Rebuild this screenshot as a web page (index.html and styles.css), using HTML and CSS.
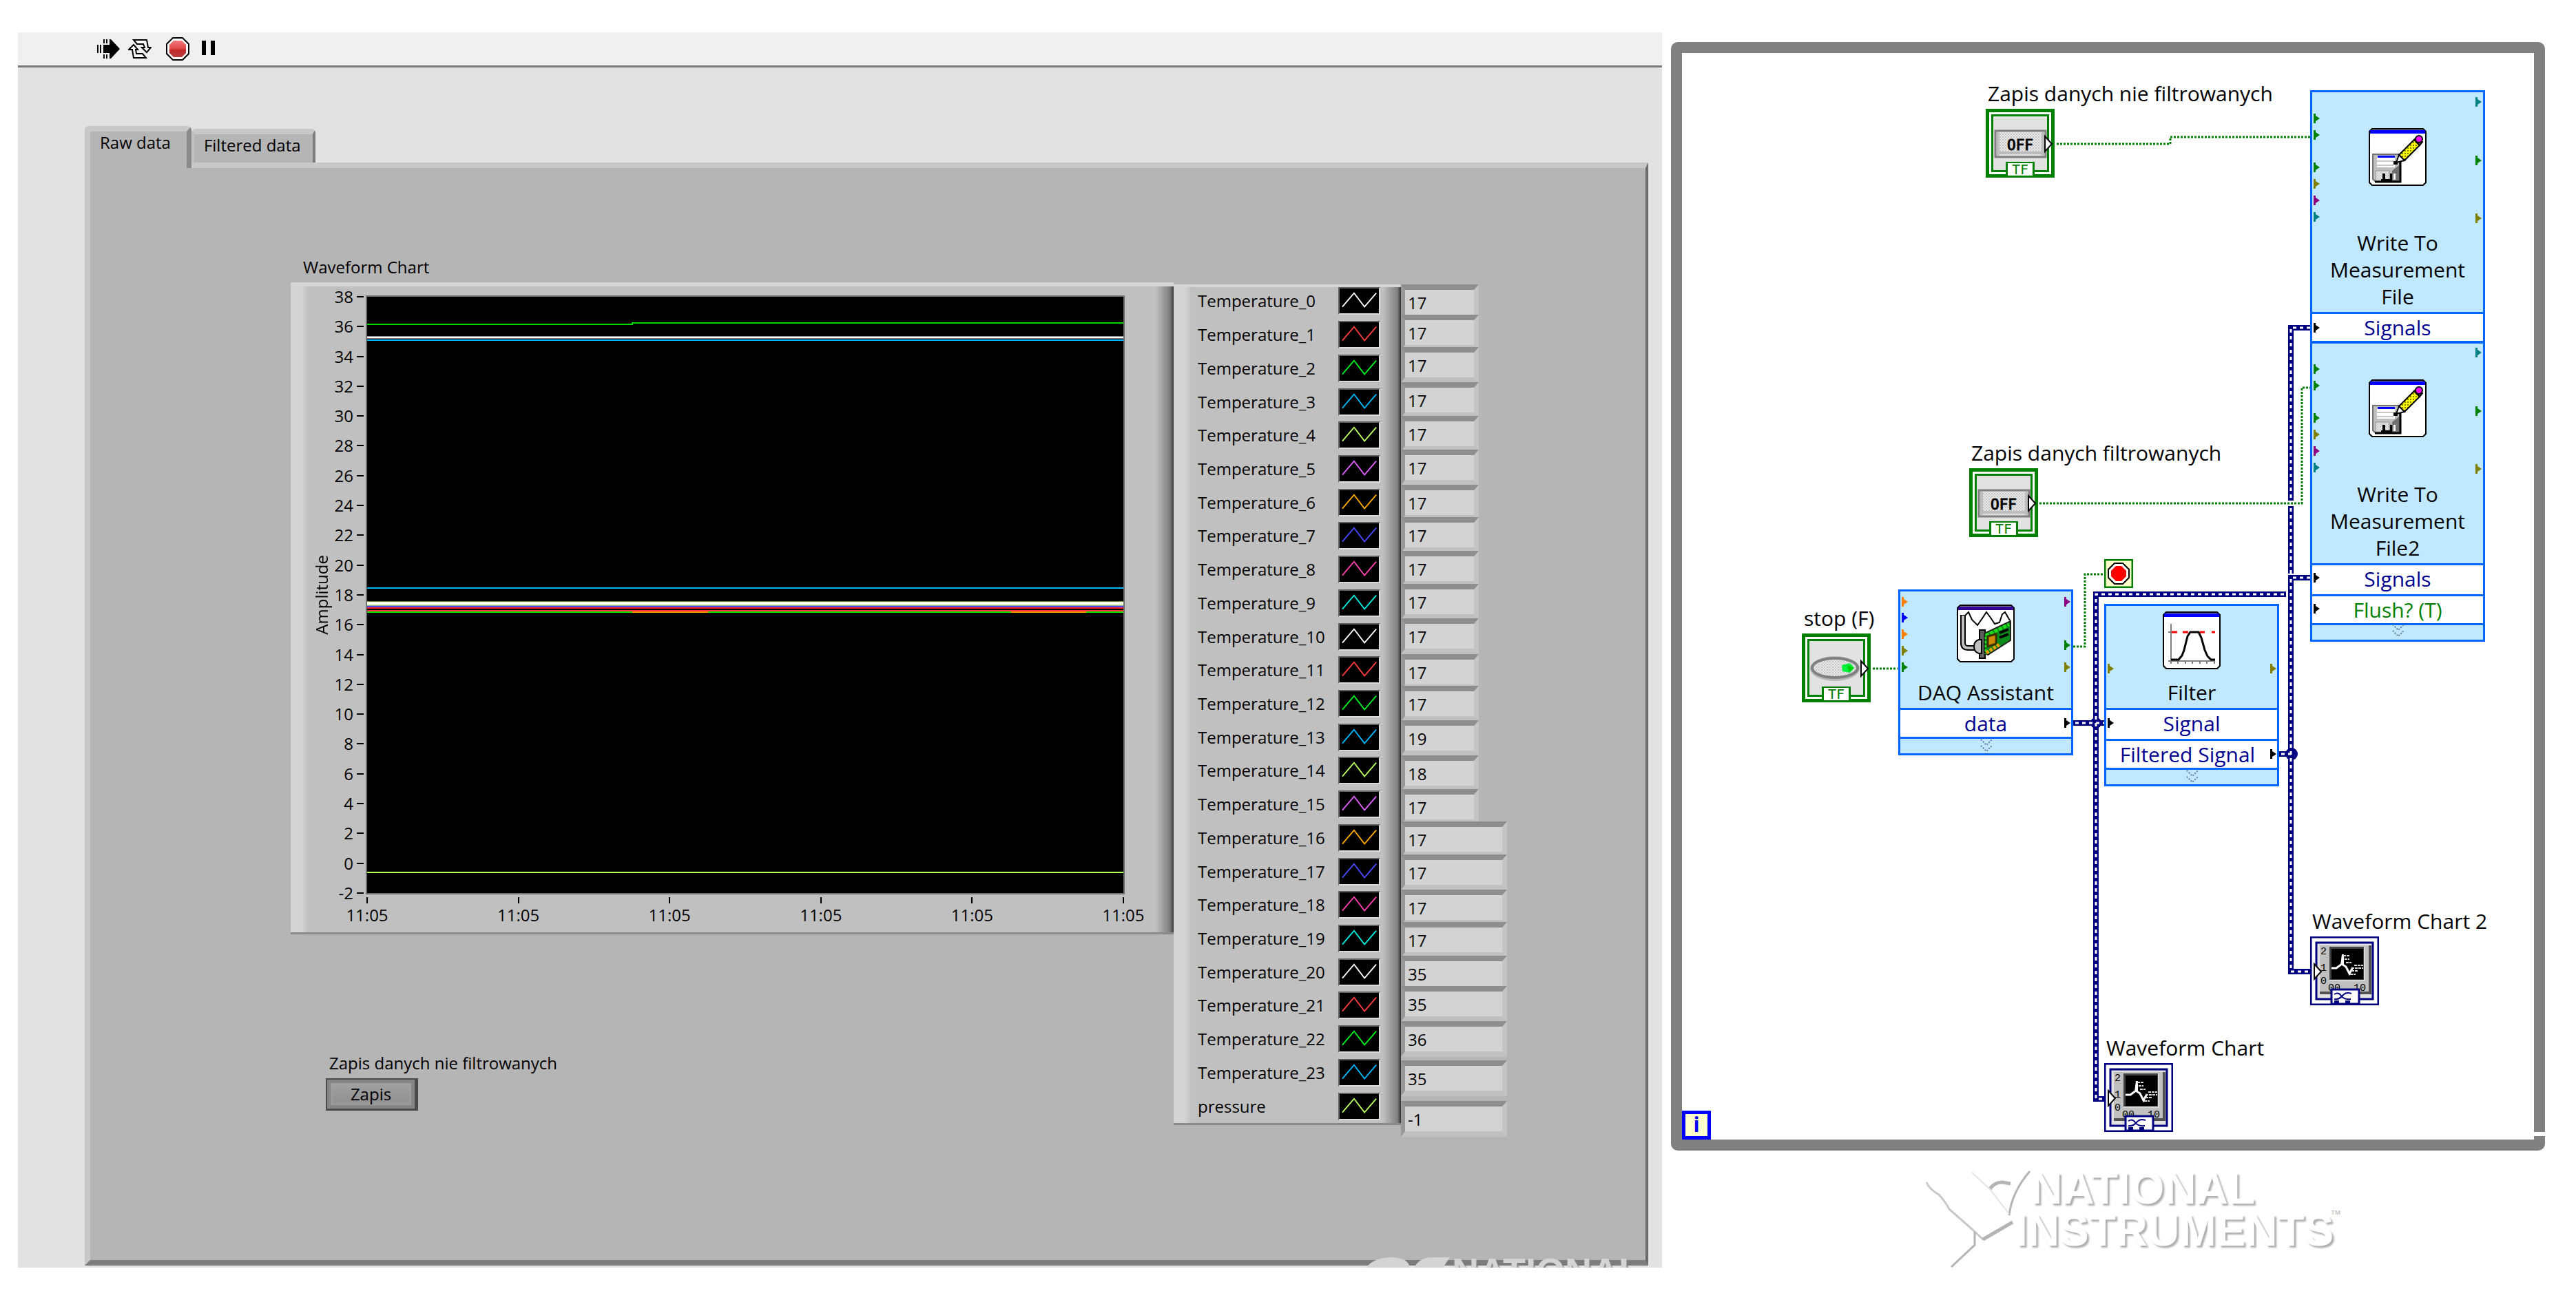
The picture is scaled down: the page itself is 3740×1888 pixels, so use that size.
FILE: index.html
```html
<!DOCTYPE html>
<html lang="pl">
<head>
<meta charset="utf-8">
<title>Waveform Chart</title>
<link rel="stylesheet" href="styles.css">
</head>
<body>
<svg class="defs" aria-hidden="true">
  <defs>
    <symbol id="zigzag" viewBox="0 0 60 38"><path d="M4 28 L22 7 L38 28 L56 7" fill="none" stroke="currentColor" stroke-width="2"/></symbol>
    <path id="port" d="M0 -7 H3 V-4 L9 0 L3 4 V7 H0 Z"/>
    <path id="port-open" d="M0 -11 L10 0 L0 11 Z" fill="#fff" stroke="#000" stroke-width="2"/>
    <path id="chevrons" d="M-8 0 L0 8 L8 0 M-8 9 L0 17 L8 9" fill="none" stroke="#5f7f99" stroke-width="2" stroke-dasharray="2 2"/>
    <linearGradient id="stopFill" x1="0" y1="0" x2="0" y2="1"><stop offset="0" stop-color="#f27a7a"/><stop offset=".5" stop-color="#e04848"/><stop offset=".55" stop-color="#c42828"/><stop offset="1" stop-color="#b84040"/></linearGradient>
    <pattern id="mesh" width="4" height="4" patternUnits="userSpaceOnUse"><rect width="4" height="4" fill="#e8e8e8"/><rect width="2" height="2" fill="#c4c4c4"/><rect x="2" y="2" width="2" height="2" fill="#d4d4d4"/></pattern>
    <pattern id="yellowMesh" width="4" height="4" patternUnits="userSpaceOnUse"><rect width="4" height="4" fill="#ffff00"/><rect width="2" height="2" fill="#808000"/></pattern>
    <symbol id="frame" viewBox="0 0 84 84"><path d="M5 1 H79 L83 5 V79 L79 83 H5 L1 79 V5 Z" fill="#fff" stroke="#000" stroke-width="2"/><path d="M5 1 H79" stroke="#000" stroke-width="3"/></symbol>
    <symbol id="write-file" viewBox="0 0 84 84">
      <use href="#frame"/><path d="M2 3 H82 V8 H2 Z" fill="#00f"/>
      <path d="M6 38 H45 V77 H9 L6 74 Z" fill="#c0c0c0" stroke="#707070" stroke-width="2"/>
      <path d="M46 46 V78 H9" fill="none" stroke="#000" stroke-width="3"/>
      <path d="M12 42 H38 V57 H12 Z" fill="#fff"/><path d="M13 40 H38 V43 H13 Z" fill="#00f"/>
      <path d="M12 48 H36 M12 54 H36" stroke="#c8c8c8" stroke-width="2"/>
      <path d="M44 54 L34 62 V76 H44 Z" fill="#707070"/><path d="M10 62 H30 V76 H10 Z" fill="url(#mesh)" stroke="#909090"/>
      <path d="M20 66 H24 V74 H20 Z M31 66 H34 V77 H18 V74 H31 Z" fill="#000"/><path d="M36 66 H39 V75 H36 Z" fill="#fff"/>
      <path d="M44 39 L66 17 L74 25 L52 47 Z" fill="url(#yellowMesh)" stroke="#000" stroke-width="2"/>
      <path d="M44 39 L40 50 L52 47 Z" fill="#fff" stroke="#000" stroke-width="2"/><path d="M36 48 H42 V53 H36 Z" fill="#000"/>
      <path d="M66 17 L70 13 L78 20 L74 25 Z" fill="#606060" stroke="#000" stroke-width="2"/><circle cx="73" cy="16" r="5" fill="#f0f" stroke="#000" stroke-width="2"/>
    </symbol>
    <symbol id="daq" viewBox="0 0 84 84">
      <use href="#frame"/><path d="M2 3 H82 V8 H2 Z" fill="#330099"/>
      <path d="M12 16 L17 11 L22 22 L30 30 L37 20 L43 11 L49 19 L55 28 L62 26 L66 14 L70 11 L77 23" fill="none" stroke="#000" stroke-width="2"/>
      <path d="M9 15 V56 Q9 63 17 63 H27" fill="none" stroke="#000" stroke-width="8"/><path d="M9 16 V56 Q9 63 17 63 H27" fill="none" stroke="#c0c0c0" stroke-width="4"/>
      <path d="M33 37 H41 V78 H33 Z" fill="#606060" stroke="#000" stroke-width="2"/>
      <path d="M36 51 H32 Q25 53 25 61 Q25 69 32 71 H36 Z" fill="#c0c0c0" stroke="#000" stroke-width="2"/>
      <path d="M40 42 L78 24 V52 L45 73 L40 70 Z" fill="#0b8a1c" stroke="#222" stroke-width="2"/>
      <path d="M42 45 L76 29" stroke="#1be01b" stroke-width="5" stroke-dasharray="5 2"/><path d="M42 47 V72" stroke="#1be01b" stroke-width="3" stroke-dasharray="3 3"/>
      <path d="M45 46 L57 43 V57 L45 61 Z" fill="#d08a00" stroke="#3a3000" stroke-width="3"/>
      <path d="M62 41 L75 36 M62 48 L75 43" stroke="#000" stroke-width="4"/>
      <path d="M43 70 L62 58" stroke="#f0a000" stroke-width="5" stroke-dasharray="4 2"/>
    </symbol>
    <symbol id="filter" viewBox="0 0 84 84">
      <use href="#frame"/><path d="M2 3 H82 V8 H2 Z" fill="#00f"/>
      <path d="M12 18 V76 M8 72 H76 M8 30 H16 M22 72 V76 M33 72 V76 M43 72 V76 M54 72 V76 M64 72 V76 M75 72 V76" stroke="#808080" stroke-width="2" fill="none"/>
      <path d="M13 30 H21 M29 30 H37 M54 30 H61 M71 30 H76" stroke="#f00" stroke-width="3"/>
      <path d="M12 70 H23 L28 64 L31 56 L36 36 L40 30 H52 L56 38 L61 56 L65 65 L70 70 H76" fill="none" stroke="#000" stroke-width="3"/>
    </symbol>
    <symbol id="bool-terminal" viewBox="0 0 100 100">
      <path d="M0 0 H100 V100 H0 Z" fill="#008000"/><path d="M5 5 H95 V95 H5 Z" fill="#fff"/><path d="M8 8 H92 V92 H8 Z" fill="#008000"/><path d="M11 11 H89 V89 H11 Z" fill="#e2e2e2"/>
      <path d="M29 77 H71 V100 H29 Z" fill="#008000"/><path d="M32 79 H68 V97 H32 Z" fill="#fff"/>
      <text x="50" y="95" class="tf">TF</text>
    </symbol>
    <symbol id="off-terminal" viewBox="0 0 100 100">
      <use href="#bool-terminal"/>
      <path d="M14 32 H87 V70 H14 Z" fill="url(#mesh)" stroke="#808080" stroke-width="3"/>
      <path d="M16 34 H20 V68 H16 Z M81 34 H86 V68 H81 Z M16 62 H86 V66 H16 Z" fill="#b0b0b0" opacity=".7"/>
      <text x="50" y="60" class="off">OFF</text>
      <use href="#port-open" x="86" y="51"/>
    </symbol>
    <symbol id="stop-terminal" viewBox="0 0 100 100">
      <use href="#bool-terminal"/>
      <ellipse cx="48" cy="51" rx="36" ry="18" fill="#b8b8b8"/><ellipse cx="48" cy="50" rx="33" ry="14" fill="url(#mesh)" stroke="#808080" stroke-width="4"/>
      <path d="M58 46 L70 43 L76 50 L70 57 L59 55 Z" fill="#00f03c"/><path d="M66 46 L76 50 L68 56 Z" fill="#00d000"/>
      <use href="#port-open" x="86" y="51"/>
    </symbol>
    <symbol id="chart-terminal" viewBox="0 0 100 100">
      <path d="M1 1 H99 V99 H1 Z" fill="#fff" stroke="#000080" stroke-width="3"/>
      <path d="M9 9 H91 V91 H9 Z" fill="#e2e2e2" stroke="#000080" stroke-width="3"/>
      <path d="M14 13 H89 V84 H14 Z" fill="#505050"/><path d="M14 13 H85 V80 H14 Z" fill="#c0c0c0"/><path d="M14 81 H89 V84 H14 Z" fill="#505050"/>
      <path d="M28 15 H80 V65 H28 Z" fill="#d8d8d8"/><path d="M28 15 H78 V63 H28 Z" fill="#404040"/><path d="M31 18 H77 V62 H31 Z" fill="#000"/>
      <path d="M31 46 H38 L46 40 L52 44 L57 54 L62 45" fill="none" stroke="#fff" stroke-width="3"/><path d="M44 42 L46 26 H49 V42 Z" fill="#fff"/>
      <path d="M48 28 H57 M50 33 H57 M52 38 H60 M60 50 H70 M58 55 H66 M64 42 H77 M60 46 H77" stroke="#d8d8d8" stroke-width="2" stroke-dasharray="4 1"/>
      <text x="15" y="26" class="scale">2</text><text x="15" y="50" class="scale">1</text><text x="15" y="69" class="scale">0</text>
      <text x="26" y="79" class="scale">00</text><text x="63" y="79" class="scale">10</text>
      <path d="M31 77 H71 V98 H31 Z" fill="#fff" stroke="#000080" stroke-width="3"/>
      <path d="M35 84 Q41 80 45 86 T59 91 M35 91 Q42 92 47 86 T60 83" fill="none" stroke="#000080" stroke-width="2"/><path d="M35 93 H42 V99 H35 Z M51 93 H58 V99 H51 Z" fill="#000080"/>
      <path d="M6 40 L16 51 L6 62 Z" fill="#fff" stroke="#000" stroke-width="2"/>
    </symbol>
  </defs>
</svg>

<main class="page">
  <section class="front">
    <header class="toolbar">
      <button type="button" class="tool" aria-label="Run"><svg viewBox="0 0 34 34"><path d="M14 11 H18 V3 H20 L33 17 L20 31 H18 V23 H14 Z" fill="#000"/><path d="M9 11 H14 V23 H9 Z" fill="#000"/><path d="M1 11 V23 M5 11 V23 M10 3 V9 M14 3 V9 M10 25 V31 M14 25 V31" stroke="#000" stroke-width="2"/></svg></button>
      <button type="button" class="tool" aria-label="Run continuously"><svg viewBox="0 0 34 34"><g fill="#fff" stroke="#000" stroke-width="2"><path d="M8 4 H27 L29 15 H33 L27 22 L20 15 H24 L22 10 H13 Z"/><path d="M26 30 H8 L6 18 H1 L8 11 L14 18 H11 L12 24 H21 Z"/></g></svg></button>
      <button type="button" class="tool tool-stop" aria-label="Abort"><svg viewBox="0 0 34 34"><path d="M10 1 H24 L33 10 V24 L24 33 H10 L1 24 V10 Z" fill="#fff" stroke="#000" stroke-width="2"/><path d="M11 5 H23 L29 11 V23 L23 29 H11 L5 23 V11 Z" fill="url(#stopFill)"/></svg></button>
      <button type="button" class="tool" aria-label="Pause"><svg viewBox="0 0 34 34"><path d="M7 5 H13 V26 H7 Z M20 5 H26 V26 H20 Z" fill="#000"/></svg></button>
    </header>
    <div class="panel">
      <div class="tabs" role="tablist">
        <button type="button" class="tab tab-active" role="tab" aria-selected="true">Raw data</button>
        <button type="button" class="tab" role="tab" aria-selected="false">Filtered data</button>
      </div>
      <div class="tab-page" role="tabpanel">
        <div class="chart-column">
          <h2 class="chart-title">Waveform Chart</h2>
          <div class="chart">
            <div class="y-title">Amplitude</div>
            <ul class="y-axis"><li>38</li><li>36</li><li>34</li><li>32</li><li>30</li><li>28</li><li>26</li><li>24</li><li>22</li><li>20</li><li>18</li><li>16</li><li>14</li><li>12</li><li>10</li><li>8</li><li>6</li><li>4</li><li>2</li><li>0</li><li>-2</li></ul>
            <svg class="plot" viewBox="0 0 1100 868" preserveAspectRatio="none" role="img" aria-label="Temperatures and pressure over time">
              <g fill="none" stroke-width="2">
                <path d="M0 41 H386 V39 H1100" stroke="#00d800"/>
                <path d="M0 60 H1100" stroke="#fff" stroke-width="3"/>
                <path d="M0 64 H1100" stroke="#00b4ff"/>
                <path d="M0 424 H1100" stroke="#00b4ff"/>
                <path d="M0 447 H1100" stroke="#d8ff90" stroke-width="7"/>
                <path d="M0 446 H1100" stroke="#fff" stroke-width="3"/>
                <path d="M0 451 H1100" stroke="#4848e8" stroke-width="3"/>
                <path d="M0 453 H1100" stroke="#ff2020"/>
                <path d="M0 457 H1100" stroke="#ff3030"/>
                <path d="M0 459 H1100" stroke="#00e800"/>
                <path d="M386 459 H496 M936 459 H1045" stroke="#ff9000"/>
                <path d="M0 837 H1100" stroke="#b4ff50"/>
              </g>
            </svg>
            <ul class="x-axis"><li>11:05</li><li>11:05</li><li>11:05</li><li>11:05</li><li>11:05</li><li>11:05</li></ul>
          </div>
          <div class="save">
            <label for="save">Zapis danych nie filtrowanych</label>
            <button type="button" id="save" class="save-button">Zapis</button>
          </div>
        </div>
        <div class="legend">
          <div class="item white"><label for="v0">Temperature_0</label><svg><use href="#zigzag"/></svg></div>
          <div class="item red"><label for="v1">Temperature_1</label><svg><use href="#zigzag"/></svg></div>
          <div class="item green"><label for="v2">Temperature_2</label><svg><use href="#zigzag"/></svg></div>
          <div class="item blue"><label for="v3">Temperature_3</label><svg><use href="#zigzag"/></svg></div>
          <div class="item lime"><label for="v4">Temperature_4</label><svg><use href="#zigzag"/></svg></div>
          <div class="item violet"><label for="v5">Temperature_5</label><svg><use href="#zigzag"/></svg></div>
          <div class="item orange"><label for="v6">Temperature_6</label><svg><use href="#zigzag"/></svg></div>
          <div class="item indigo"><label for="v7">Temperature_7</label><svg><use href="#zigzag"/></svg></div>
          <div class="item pink"><label for="v8">Temperature_8</label><svg><use href="#zigzag"/></svg></div>
          <div class="item cyan"><label for="v9">Temperature_9</label><svg><use href="#zigzag"/></svg></div>
          <div class="item white"><label for="v10">Temperature_10</label><svg><use href="#zigzag"/></svg></div>
          <div class="item red"><label for="v11">Temperature_11</label><svg><use href="#zigzag"/></svg></div>
          <div class="item green"><label for="v12">Temperature_12</label><svg><use href="#zigzag"/></svg></div>
          <div class="item blue"><label for="v13">Temperature_13</label><svg><use href="#zigzag"/></svg></div>
          <div class="item lime"><label for="v14">Temperature_14</label><svg><use href="#zigzag"/></svg></div>
          <div class="item violet"><label for="v15">Temperature_15</label><svg><use href="#zigzag"/></svg></div>
          <div class="item orange"><label for="v16">Temperature_16</label><svg><use href="#zigzag"/></svg></div>
          <div class="item indigo"><label for="v17">Temperature_17</label><svg><use href="#zigzag"/></svg></div>
          <div class="item pink"><label for="v18">Temperature_18</label><svg><use href="#zigzag"/></svg></div>
          <div class="item cyan"><label for="v19">Temperature_19</label><svg><use href="#zigzag"/></svg></div>
          <div class="item white"><label for="v20">Temperature_20</label><svg><use href="#zigzag"/></svg></div>
          <div class="item red"><label for="v21">Temperature_21</label><svg><use href="#zigzag"/></svg></div>
          <div class="item green"><label for="v22">Temperature_22</label><svg><use href="#zigzag"/></svg></div>
          <div class="item blue"><label for="v23">Temperature_23</label><svg><use href="#zigzag"/></svg></div>
          <div class="item lime"><label for="v24">pressure</label><svg><use href="#zigzag"/></svg></div>
        </div>
        <div class="values">
          <input id="v0" value="17" readonly>
          <input id="v1" value="17" readonly>
          <input id="v2" value="17" readonly>
          <input id="v3" value="17" readonly>
          <input id="v4" value="17" readonly>
          <input id="v5" value="17" readonly>
          <input id="v6" value="17" readonly>
          <input id="v7" value="17" readonly>
          <input id="v8" value="17" readonly>
          <input id="v9" value="17" readonly>
          <input id="v10" value="17" readonly>
          <input id="v11" value="17" readonly>
          <input id="v12" value="17" readonly>
          <input id="v13" value="19" readonly>
          <input id="v14" value="18" readonly>
          <input id="v15" value="17" readonly>
          <input id="v16" class="wide" value="17" readonly>
          <input id="v17" class="wide" value="17" readonly>
          <input id="v18" class="wide" value="17" readonly>
          <input id="v19" class="wide" value="17" readonly>
          <input id="v20" class="wide" value="35" readonly>
          <input id="v21" class="wide" value="35" readonly>
          <input id="v22" class="wide" value="36" readonly>
          <input id="v23" class="wide" value="35" readonly>
          <input id="v24" class="wide" value="-1" readonly>
        </div>
      </div>
    </div>
    <svg class="watermark" viewBox="0 0 390 16" aria-hidden="true">
      <path d="M0 16 Q12 1 38 1 Q62 2 64 16 Z M70 16 Q78 1 96 1 H122 L112 16 Z" fill="#d4d4d4"/>
      <text x="125" y="40" class="mark mark-small">NATIONAL</text>
    </svg>
  </section>

  <section class="diagram">
    <div class="loop">
      <div class="node write-1">
        <div class="node-head"><svg class="node-icon"><use href="#write-file"/></svg><div class="node-name">Write To<br>Measurement<br>File</div></div>
        <div class="node-row">Signals</div>
      </div>
      <div class="node write-2">
        <div class="node-head"><svg class="node-icon"><use href="#write-file"/></svg><div class="node-name">Write To<br>Measurement<br>File2</div></div>
        <div class="node-row tall">Signals</div>
        <div class="node-row flush">Flush? (T)</div>
        <div class="node-foot"></div>
      </div>
      <div class="node daq">
        <div class="node-head"><svg class="node-icon"><use href="#daq"/></svg><div class="node-name">DAQ Assistant</div></div>
        <div class="node-row">data</div>
        <div class="node-foot"></div>
      </div>
      <div class="node filter">
        <div class="node-head"><svg class="node-icon"><use href="#filter"/></svg><div class="node-name">Filter</div></div>
        <div class="node-row tall">Signal</div>
        <div class="node-row output">Filtered Signal</div>
        <div class="node-foot"></div>
      </div>

      <div class="terminal save-raw"><span>Zapis danych nie filtrowanych</span><svg><use href="#off-terminal"/></svg></div>
      <div class="terminal save-filtered"><span>Zapis danych filtrowanych</span><svg><use href="#off-terminal"/></svg></div>
      <div class="terminal stop"><span>stop (F)</span><svg><use href="#stop-terminal"/></svg></div>
      <div class="terminal chart-2"><span>Waveform Chart 2</span><svg><use href="#chart-terminal"/></svg></div>
      <div class="terminal chart-1"><span>Waveform Chart</span><svg><use href="#chart-terminal"/></svg></div>
      <svg class="condition" viewBox="0 0 42 42" role="img" aria-label="Stop condition"><path d="M1 1 H41 V41 H1 Z" fill="#ffffcc" stroke="#008000" stroke-width="3"/><path d="M15 6 H27 L36 15 V27 L27 36 H15 L6 27 V15 Z" fill="#fff" stroke="#000" stroke-width="2"/><path d="M17 10 H25 L32 17 V25 L25 32 H17 L10 25 V17 Z" fill="#f00"/></svg>
      <div class="iteration">i</div>

      <!-- wires and node ports -->
      <svg class="wires" viewBox="2442 77 1237 1578" aria-hidden="true">
        <g fill="none" stroke="#008000" stroke-width="3" stroke-dasharray="3 2">
          <path d="M2986 209 H3151 V199 H3354"/>
          <path d="M2961 731 H3342 V563 H3354"/>
          <path d="M2719 971 H2755"/>
          <path d="M3010 939 H3027 V834 H3055"/>
        </g>
        <g fill="none" stroke="#000080" stroke-width="8">
          <path d="M3354 476 H3326 V727 M3326 735 V833"/>
          <path d="M3354 839 H3326 V1411 H3354"/>
          <path d="M3319 863 H3043 V1596 H3055"/>
          <path d="M3010 1050 H3055 M3309 1095 H3326"/>
        </g>
        <g fill="#000080"><circle cx="3043" cy="1050" r="8"/><circle cx="3327" cy="1095" r="9"/></g>
        <g fill="none" stroke="#fff" stroke-width="3" stroke-dasharray="5 5">
          <path d="M3354 476 H3326 V727 M3326 738 V833"/>
          <path d="M3354 839 H3326 V1411 H3354"/>
          <path d="M3316 863 H3043 V1596 H3055"/>
          <path d="M3013 1050 H3055 M3312 1095 H3326"/>
        </g>
        <g fill="#008000">
          <use href="#port" x="3359" y="172"/><use href="#port" x="3359" y="196"/><use href="#port" x="3359" y="243"/><use href="#port" x="3594" y="233"/>
          <use href="#port" x="3359" y="536"/><use href="#port" x="3359" y="560"/><use href="#port" x="3359" y="607"/><use href="#port" x="3594" y="597"/>
          <use href="#port" x="2761" y="969"/><use href="#port" x="2997" y="937"/>
        </g>
        <g fill="#808000">
          <use href="#port" x="3359" y="267"/><use href="#port" x="3594" y="317"/><use href="#port" x="3359" y="631"/><use href="#port" x="3594" y="681"/>
          <use href="#port" x="2761" y="945"/><use href="#port" x="2997" y="969"/><use href="#port" x="3060" y="971"/><use href="#port" x="3296" y="971"/>
        </g>
        <g fill="#8b0080"><use href="#port" x="3359" y="291"/><use href="#port" x="3359" y="655"/><use href="#port" x="2997" y="874"/></g>
        <g fill="#008080"><use href="#port" x="3359" y="315"/><use href="#port" x="3594" y="148"/><use href="#port" x="3359" y="679"/><use href="#port" x="3594" y="512"/></g>
        <g fill="#ff8000"><use href="#port" x="2761" y="874"/><use href="#port" x="2761" y="921"/></g>
        <use href="#port" x="2761" y="897" fill="#00f"/>
        <g fill="#000"><use href="#port" x="3359" y="476"/><use href="#port" x="3359" y="839"/><use href="#port" x="3359" y="884"/><use href="#port" x="2997" y="1050"/><use href="#port" x="3060" y="1050"/><use href="#port" x="3296" y="1095"/></g>
        <use href="#chevrons" x="3482" y="907"/><use href="#chevrons" x="2884" y="1074"/><use href="#chevrons" x="3183" y="1119"/>
      </svg>
    </div>
    <svg class="logo" viewBox="0 0 620 144">
      <g fill="none" stroke="#b4b4b4" stroke-width="3">
        <path d="M2 20 Q6 30 20 38 Q28 46 35 59 L68 88 L84 103 L127 78" stroke="#c8c8c8"/>
        <path d="M84 103 L127 78" stroke-width="5"/>
        <path d="M152 4 Q126 34 122 68"/>
        <path d="M94 30 Q100 20 112 20 L124 22" stroke-width="5"/>
        <path d="M68 6 L94 30 L122 66" stroke="#e4e4e4" stroke-width="2"/>
        <path d="M72 92 V111 L38 143"/>
      </g>
      <text x="153" y="51" class="mark">NATIONAL</text>
      <text x="131" y="112" class="mark">INSTRUMENTS</text>
      <text x="588" y="72" class="trade">™</text>
    </svg>
  </section>
</main>
</body>
</html>
```
FILE: styles.css
```css
* { box-sizing: border-box; }

body {
  margin: 0;
  background: #fff;
  color: #000;
  font-family: "Open Sans", "Noto Sans", sans-serif;
  font-size: 24px;
  line-height: 30px;
}

button, input { font: inherit; color: inherit; }
ul { margin: 0; padding: 0; list-style: none; }
.defs { position: absolute; width: 0; height: 0; }

.page {
  display: grid;
  grid-template-columns: 2387fr 1269fr;
  gap: 13px;
  min-height: 100vh;
  padding: 47px 45px 47px 26px;
}

/* Front panel */
.front {
  position: relative;
  display: flex;
  flex-direction: column;
  background: #e2e2e2;
}
.toolbar {
  display: flex;
  align-items: center;
  gap: 11px;
  height: 51px;
  padding-left: 115px;
  background: #f0f0f0;
  border-bottom: 3px solid #7a7a7a;
}
.tool { width: 34px; height: 34px; padding: 0; border: 0; background: none; }
.tool svg { display: block; width: 34px; height: 34px; }
.tool-stop { margin-left: 10px; }

.panel {
  display: flex;
  flex: 1;
  flex-direction: column;
  padding: 85px 20px 3px 97px;
}
.tabs { display: flex; align-items: flex-end; }
.tab {
  height: 49px;
  padding: 1px 17px 10px 14px;
  border: solid;
  border-width: 8px 4px 0;
  border-color: #c8c8c8 #7c7c7c #c8c8c8 #c0c0c0;
  border-radius: 6px 6px 0 0;
  background: #b5b5b5;
  line-height: 30px;
}
.tab-active {
  position: relative;
  height: 61px;
  margin-bottom: -8px;
  padding: 1px 23px 22px 14px;
  border-width: 8px 7px 0 8px;
  border-color: #c8c8c8 #8a8a8a #c8c8c8 #c8c8c8;
}
.tab-page {
  display: flex;
  flex: 1;
  align-items: flex-start;
  padding: 129px 201px 130px 291px;
  border: solid;
  border-width: 8px 4px 8px 8px;
  border-color: #c8c8c8 #6c6c6c #7c7c7c #c8c8c8;
  background: #b5b5b5;
}

/* Waveform chart */
.chart-column { flex: 1; }
.chart-title { margin: 0 0 7px 18px; font-size: 24px; font-weight: 400; line-height: 30px; }
.chart {
  display: grid;
  grid-template-columns: 46px 50px 1fr;
  grid-template-rows: 868px 41px;
  row-gap: 5px;
  padding: 20px 72px 13px 14px;
  background:
    linear-gradient(#d4d4d4, #d4d4d4) top / 100% 6px no-repeat,
    linear-gradient(#8a8a8a, #8a8a8a) bottom / 100% 3px no-repeat,
    linear-gradient(90deg, #d4d4d4 16px, #c0c0c0 26px, #c0c0c0 calc(100% - 26px), #808080 calc(100% - 6px), #404040);
}
.y-title {
  justify-self: end;
  align-self: center;
  writing-mode: vertical-rl;
  transform: rotate(180deg);
}
.y-axis {
  display: flex;
  flex-direction: column;
  justify-content: space-between;
  margin: -14px 4px -14px 0;
}
.y-axis li { display: flex; justify-content: flex-end; align-items: center; gap: 5px; }
.y-axis li::after { content: ""; width: 10px; height: 2px; background: #000; }
.plot {
  width: 100%;
  height: 100%;
  background: #000;
  outline: 2px solid #707070;
  outline-offset: -1px;
}
.x-axis {
  display: flex;
  grid-column: 3;
  justify-content: space-between;
  margin: 0 -32px;
}
.x-axis li { display: flex; flex-direction: column; align-items: center; gap: 2px; width: 66px; }
.x-axis li::before { content: ""; flex: none; width: 2px; height: 9px; background: #000; }

.save { display: flex; flex-direction: column; align-items: flex-start; gap: 7px; margin-top: 172px; padding-left: 51px; }
.save label { padding-left: 5px; }
.save-button {
  width: 134px;
  height: 47px;
  padding: 0;
  border: solid #4a4a4a;
  border-width: 2px 5px 3px 2px;
  background: linear-gradient(#a4a4a4, #8c8c8c);
  box-shadow: inset 0 0 0 5px #858585, inset 0 0 5px 7px #a0a0a0;
}

/* Plot legend and indicators */
.legend {
  display: grid;
  grid-template-rows: repeat(25, 1fr);
  width: 330px;
  min-height: 1221px;
  margin-top: 40px;
  padding: 0 30px 3px 35px;
  background:
    linear-gradient(#d4d4d4, #d4d4d4) top / 100% 4px no-repeat,
    linear-gradient(#8a8a8a, #8a8a8a) bottom / 100% 3px no-repeat,
    linear-gradient(90deg, #d4d4d4 16px, #c0c0c0 26px, #c0c0c0 calc(100% - 26px), #808080 calc(100% - 5px), #303030);
}
.item { display: flex; justify-content: space-between; align-items: center; }
.item label { color: #000; }
.item svg {
  width: 61px;
  height: 40px;
  border: solid;
  border-width: 2px;
  border-color: #606060 #dcdcdc #dcdcdc #606060;
  background: #000;
}
.white { color: #fff; }
.red { color: #ff3c3c; }
.green { color: #00f020; }
.blue { color: #00b8ff; }
.lime { color: #b8ff60; }
.violet { color: #e060ff; }
.orange { color: #ffa800; }
.indigo { color: #4848ff; }
.pink { color: #ff40b0; }
.cyan { color: #00f0e0; }

.values {
  display: grid;
  grid-template-rows: 44px 47px 51px 49px 49px 51px 47px 49px 48px 50px 52px 46px 50px 51px 49px 47px 48px 51px 47px 49px 44px 51px 57px 59px 52px;
  align-items: start;
  width: 154px;
  margin-top: 40px;
}
.values input {
  width: 113px;
  height: 52px;
  padding: 0 4px;
  border: solid;
  border-width: 8px 7px 8px 6px;
  border-color: #8e8e8e #c4c4c4 #c0c0c0 #989898;
  background: #d3d3d3;
}
.values .wide { width: 154px; }

.watermark { position: absolute; right: 40px; bottom: 0; width: 390px; height: 16px; }

/* Block diagram */
.diagram { padding-top: 14px; }
.loop {
  position: relative;
  min-height: 1610px;
  border: 16px solid #808080;
  border-radius: 10px;
  background: #fff;
  font-size: 30px;
  line-height: 39px;
}
/* break in the loop border above its resize corner */
.loop::after {
  content: "";
  position: absolute;
  right: -16px;
  bottom: 5px;
  width: 16px;
  height: 6px;
  background: #fff;
}
.node {
  position: absolute;
  width: 254px;
  border: 3px solid #0066ff;
  background: #fff;
  text-align: center;
}
.node-head {
  display: flex;
  flex-direction: column;
  align-items: center;
  justify-content: space-between;
  padding-bottom: 3px;
  background: #c0e8ff;
}
.node-icon { width: 84px; height: 84px; }
.node-row { height: 42px; border-top: 3px solid #0066ff; color: #000090; }
.node-row.tall { height: 45px; }
.node-row.flush { color: #008000; }
.node-row.output { padding-right: 12px; }
.node-foot { height: 24px; border-top: 3px solid #0066ff; background: #c0e8ff; }

.write-1 { left: 912px; top: 54px; }
.write-2 { left: 912px; top: 419px; }
.write-1 .node-head, .write-2 .node-head { height: 319px; padding-top: 52px; }
.daq { left: 314px; top: 779px; }
.daq .node-head { height: 169px; padding-top: 19px; }
.filter { left: 613px; top: 800px; }
.filter .node-head { height: 148px; padding-top: 8px; }

.terminal { position: absolute; display: flex; flex-direction: column; white-space: nowrap; }
.terminal span { padding-left: 3px; }
.terminal svg { width: 100px; height: 100px; margin-top: 3px; }
.save-raw { left: 441px; top: 39px; }
.save-filtered { left: 417px; top: 561px; }
.stop { left: 174px; top: 801px; }
.chart-2 { left: 912px; top: 1241px; }
.chart-1 { left: 613px; top: 1425px; }
.condition { position: absolute; left: 613px; top: 735px; width: 42px; height: 42px; }
.iteration {
  position: absolute;
  left: 0;
  bottom: 0;
  width: 42px;
  height: 42px;
  border: 5px solid #0000ff;
  background: #ffffcc;
  color: #0000ff;
  font-weight: 700;
  line-height: 30px;
  text-align: center;
}
.wires { position: absolute; left: 0; top: 0; width: 1237px; height: 1578px; pointer-events: none; }

.tf { font: 20px "DejaVu Sans Mono", monospace; fill: #008000; text-anchor: middle; }
.off { font: 21px "DejaVu Sans Mono", monospace; stroke: #000; stroke-width: 1px; text-anchor: middle; }
.scale { font: 15px "Liberation Mono", monospace; }

/* Maker's mark */
.logo { display: block; width: 620px; height: 144px; margin: 26px 0 0 369px; }
.mark {
  font: 700 64px "Liberation Sans", sans-serif;
  fill: #fff;
  filter: drop-shadow(3px 3px 1px #b0b0b0);
}
.mark-small {
  font-size: 54px;
  fill: #d4d4d4;
  filter: drop-shadow(2px 2px 1px #808080);
}
.trade { font: 16px "Liberation Sans", sans-serif; fill: #bdbdbd; }
```
